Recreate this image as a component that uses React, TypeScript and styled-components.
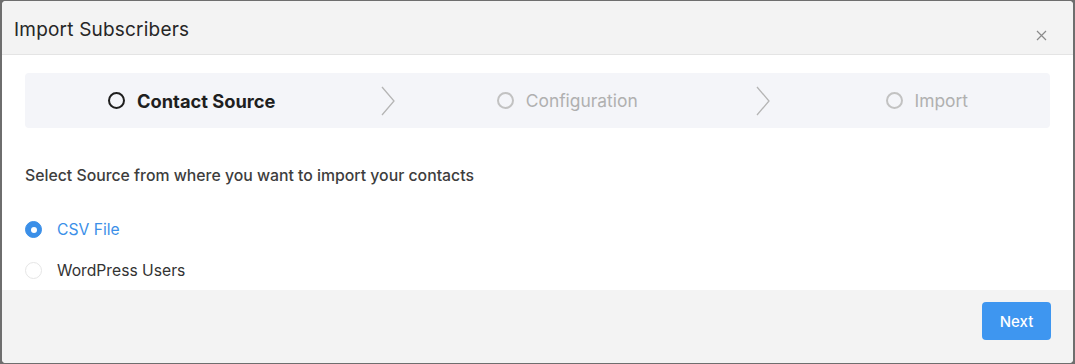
import React, { useState } from "react";
import styled, { createGlobalStyle } from "styled-components";

const GlobalStyle = createGlobalStyle`
    html, body {
        margin: 0;
        padding: 0;
        background: #6e6e6e;
        font-family: Inter, "Noto Sans", "Liberation Sans", sans-serif;
    }
    * {
        box-sizing: border-box;
    }
`

const Overlay = styled.div`
    width: 1075px;
    height: 364px;
    padding: 1px 2px 1px 2px;
    background: #6e6e6e;
`

const Modal = styled.div`
    display: flex;
    flex-direction: column;
    height: 100%;
    background: #fff;
    border-radius: 4px;
    overflow: hidden;
`

const Header = styled.div`
    display: flex;
    align-items: center;
    justify-content: space-between;
    height: 54px;
    padding: 0 26px 0 12px;
    background: #f3f3f3;
    border-bottom: 1px solid #e4e4e4;
`

const Title = styled.div`
    font-size: 19px;
    letter-spacing: 0.2px;
    color: #262626;
    margin-top: 3px;
`

const Close = styled.button`
    border: none;
    background: none;
    padding: 0;
    margin-top: 16px;
    cursor: pointer;
    display: flex;
`

const Body = styled.div`
    flex: 1;
    padding: 18px 23px 0 23px;
`

const Steps = styled.div`
    display: flex;
    align-items: center;
    height: 55px;
    padding: 0 82px;
    background: #f4f5f9;
    border-radius: 4px;
`

const Step = styled.div<{ $last?: boolean }>`
    display: flex;
    align-items: center;
    flex: ${p => (p.$last ? "none" : "1 1 0")};
    height: 100%;
`

const StepIcon = styled.span<{ $active?: boolean }>`
    width: 17px;
    height: 17px;
    border-radius: 50%;
    border: 2px solid ${p => (p.$active ? "#1f1f1f" : "#c2c2c2")};
    flex-shrink: 0;
    margin-left: 1px;
`

const StepTitle = styled.span<{ $active?: boolean }>`
    margin-left: 12px;
    font-size: ${p => (p.$active ? "18.3px" : "17.4px")};
    font-weight: ${p => (p.$active ? 700 : 400)};
    color: ${p => (p.$active ? "#1f1f1f" : "#b0b0b0")};
    white-space: nowrap;
`

const Arrow = styled.span`
    flex: 1;
    display: flex;
    justify-content: center;
    align-items: center;
    padding-left: 4px;
`

const Lead = styled.div`
    margin-top: 38px;
    font-size: 15.8px;
    font-weight: 500;
    color: #3d3d3d;
`

const Options = styled.div`
    display: flex;
    flex-direction: column;
    gap: 22px;
    margin-top: 35px;
`

const Option = styled.label<{ $checked?: boolean }>`
    display: flex;
    align-items: center;
    gap: 15px;
    font-size: 15.7px;
    color: ${p => (p.$checked ? "#3b8fe8" : "#333")};
    cursor: pointer;
`

const Radio = styled.span<{ $checked?: boolean }>`
    width: 17px;
    height: 17px;
    border-radius: 50%;
    border: 1px solid ${p => (p.$checked ? "#3b8fe8" : "#e6e6e6")};
    background: ${p => (p.$checked ? "#3b8fe8" : "#fff")};
    display: flex;
    align-items: center;
    justify-content: center;
    &::after {
        content: "";
        width: 6px;
        height: 6px;
        border-radius: 50%;
        background: #fff;
        display: ${p => (p.$checked ? "block" : "none")};
    }
`

const Footer = styled.div`
    display: flex;
    justify-content: flex-end;
    align-items: flex-start;
    height: 73px;
    padding: 12px 22px 0 0;
    background: #f3f3f3;
`

const NextButton = styled.button`
    width: 69px;
    height: 38px;
    border: none;
    border-radius: 4px;
    background: #3e96f0;
    color: #fff;
    font-family: inherit;
    font-size: 15px;
    font-weight: 500;
    cursor: pointer;
`

function Chevron() {
    return (
        <svg width="16" height="30" viewBox="0 0 16 30">
            <path d="M2 1 L14 15 L2 29" fill="none" stroke="#b5b5b5" strokeWidth="1.3" />
        </svg>
    )
}

export default function App() {
    const [source, setSource] = useState("csv");
    const steps = ["Contact Source", "Configuration", "Import"];
    const sources = [
        { id: "csv", label: "CSV File" },
        { id: "wp", label: "WordPress Users" },
    ];

    return (
        <>
            <GlobalStyle />
            <Overlay>
                <Modal>
                    <Header>
                        <Title>Import Subscribers</Title>
                        <Close aria-label="Close">
                            <svg width="11" height="11" viewBox="0 0 11 11">
                                <path d="M1 1 L10 10 M10 1 L1 10" stroke="#8a8a8a" strokeWidth="1.2" />
                            </svg>
                        </Close>
                    </Header>
                    <Body>
                        <Steps>
                            {steps.map((s, i) => (
                                <Step key={s} $last={i === steps.length - 1}>
                                    <StepIcon $active={i === 0} />
                                    <StepTitle $active={i === 0}>{s}</StepTitle>
                                    {i < steps.length - 1 && <Arrow><Chevron /></Arrow>}
                                </Step>
                            ))}
                        </Steps>
                        <Lead>Select Source from where you want to import your contacts</Lead>
                        <Options>
                            {sources.map(o => (
                                <Option key={o.id} $checked={source === o.id} onClick={() => setSource(o.id)}>
                                    <Radio $checked={source === o.id} />
                                    {o.label}
                                </Option>
                            ))}
                        </Options>
                    </Body>
                    <Footer>
                        <NextButton>Next</NextButton>
                    </Footer>
                </Modal>
            </Overlay>
        </>
    )
}
